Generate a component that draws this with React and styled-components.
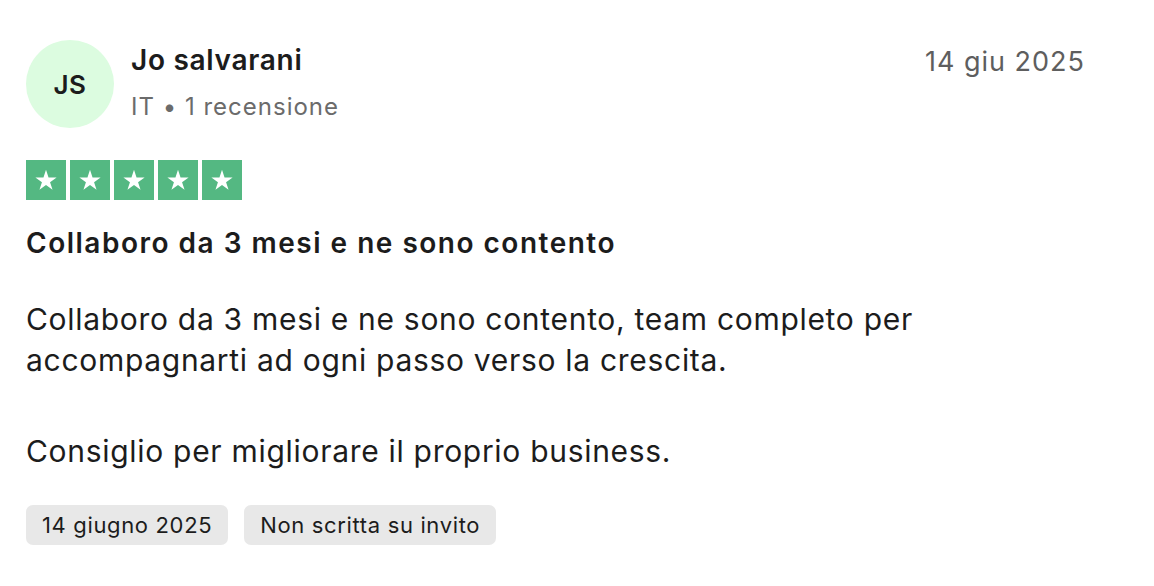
import React from 'react'
import styled, { createGlobalStyle } from 'styled-components'

const Global = createGlobalStyle`
  body {
    margin: 0;
    background: #fff;
    font-family: Inter, "Noto Sans", sans-serif;
    color: #1c1c1c;
  }
`

const Card = styled.article`
  width: 1154px;
  height: 586px;
  box-sizing: border-box;
  padding: 40px 69px 0 26px;
`

const Header = styled.header`
  display: flex;
  align-items: flex-start;
`

const Avatar = styled.div`
  width: 88px;
  height: 88px;
  border-radius: 50%;
  background: #dcfce0;
  display: flex;
  align-items: center;
  justify-content: center;
  font-size: 26px;
  font-weight: 600;
  letter-spacing: 0.5px;
  color: #1c1c1c;
  flex-shrink: 0;
`

const Who = styled.div`
  margin-left: 17px;
  padding-top: 3px;
  flex: 1;
`

const Name = styled.div`
  font-size: 28px;
  font-weight: 600;
  line-height: 34px;
  letter-spacing: 0.7px;
`

const Meta = styled.div`
  margin-top: 15px;
  font-size: 24px;
  line-height: 30px;
  letter-spacing: 1px;
  color: #6b6b6b;
`

const DateText = styled.time`
  padding-top: 5px;
  font-size: 27px;
  line-height: 34px;
  letter-spacing: 1px;
  color: #5e5e5e;
`

const Stars = styled.div`
  display: flex;
  gap: 4px;
  margin-top: 32px;
`

const StarBox = styled.span`
  width: 40px;
  height: 40px;
  background: #54b882;
  display: flex;
  align-items: center;
  justify-content: center;
`

const Title = styled.h2`
  margin: 27px 0 0;
  font-size: 28px;
  line-height: 32px;
  font-weight: 600;
  letter-spacing: 1.5px;
`

const Body = styled.p`
  margin: ${p => p.$gap}px 0 0;
  font-size: 30px;
  line-height: 41px;
  font-weight: 400;
  letter-spacing: 0.7px;
`

const Tags = styled.div`
  display: flex;
  gap: 16px;
  margin-top: 33px;
`

const Tag = styled.span`
  height: 40px;
  padding: 0 16px;
  display: flex;
  align-items: center;
  background: #e8e8e8;
  border-radius: 7px;
  font-size: 22px;
  letter-spacing: 0.65px;
  color: #1c1c1c;
`

function Star() {
  return (
    <StarBox>
      <svg width="26" height="26" viewBox="0 0 24 24">
        <path d="M12 2.5l2.35 7.1H21.8l-6.05 4.4 2.3 7.1L12 16.7l-6.05 4.4 2.3-7.1-6.05-4.4h7.45z" fill="#fff" />
      </svg>
    </StarBox>
  )
}

export default function App() {
  return (
    <Card>
      <Global />
      <Header>
        <Avatar>JS</Avatar>
        <Who>
          <Name>Jo salvarani</Name>
          <Meta>IT • 1 recensione</Meta>
        </Who>
        <DateText>14 giu 2025</DateText>
      </Header>
      <Stars>
        {[0, 1, 2, 3, 4].map(i => <Star key={i} />)}
      </Stars>
      <Title>Collaboro da 3 mesi e ne sono contento</Title>
      <Body $gap={40}>
        Collaboro da 3 mesi e ne sono contento, team completo per
        <br />
        accompagnarti ad ogni passo verso la crescita.
      </Body>
      <Body $gap={50}>Consiglio per migliorare il proprio business.</Body>
      <Tags>
        <Tag>14 giugno 2025</Tag>
        <Tag>Non scritta su invito</Tag>
      </Tags>
    </Card>
  )
}
